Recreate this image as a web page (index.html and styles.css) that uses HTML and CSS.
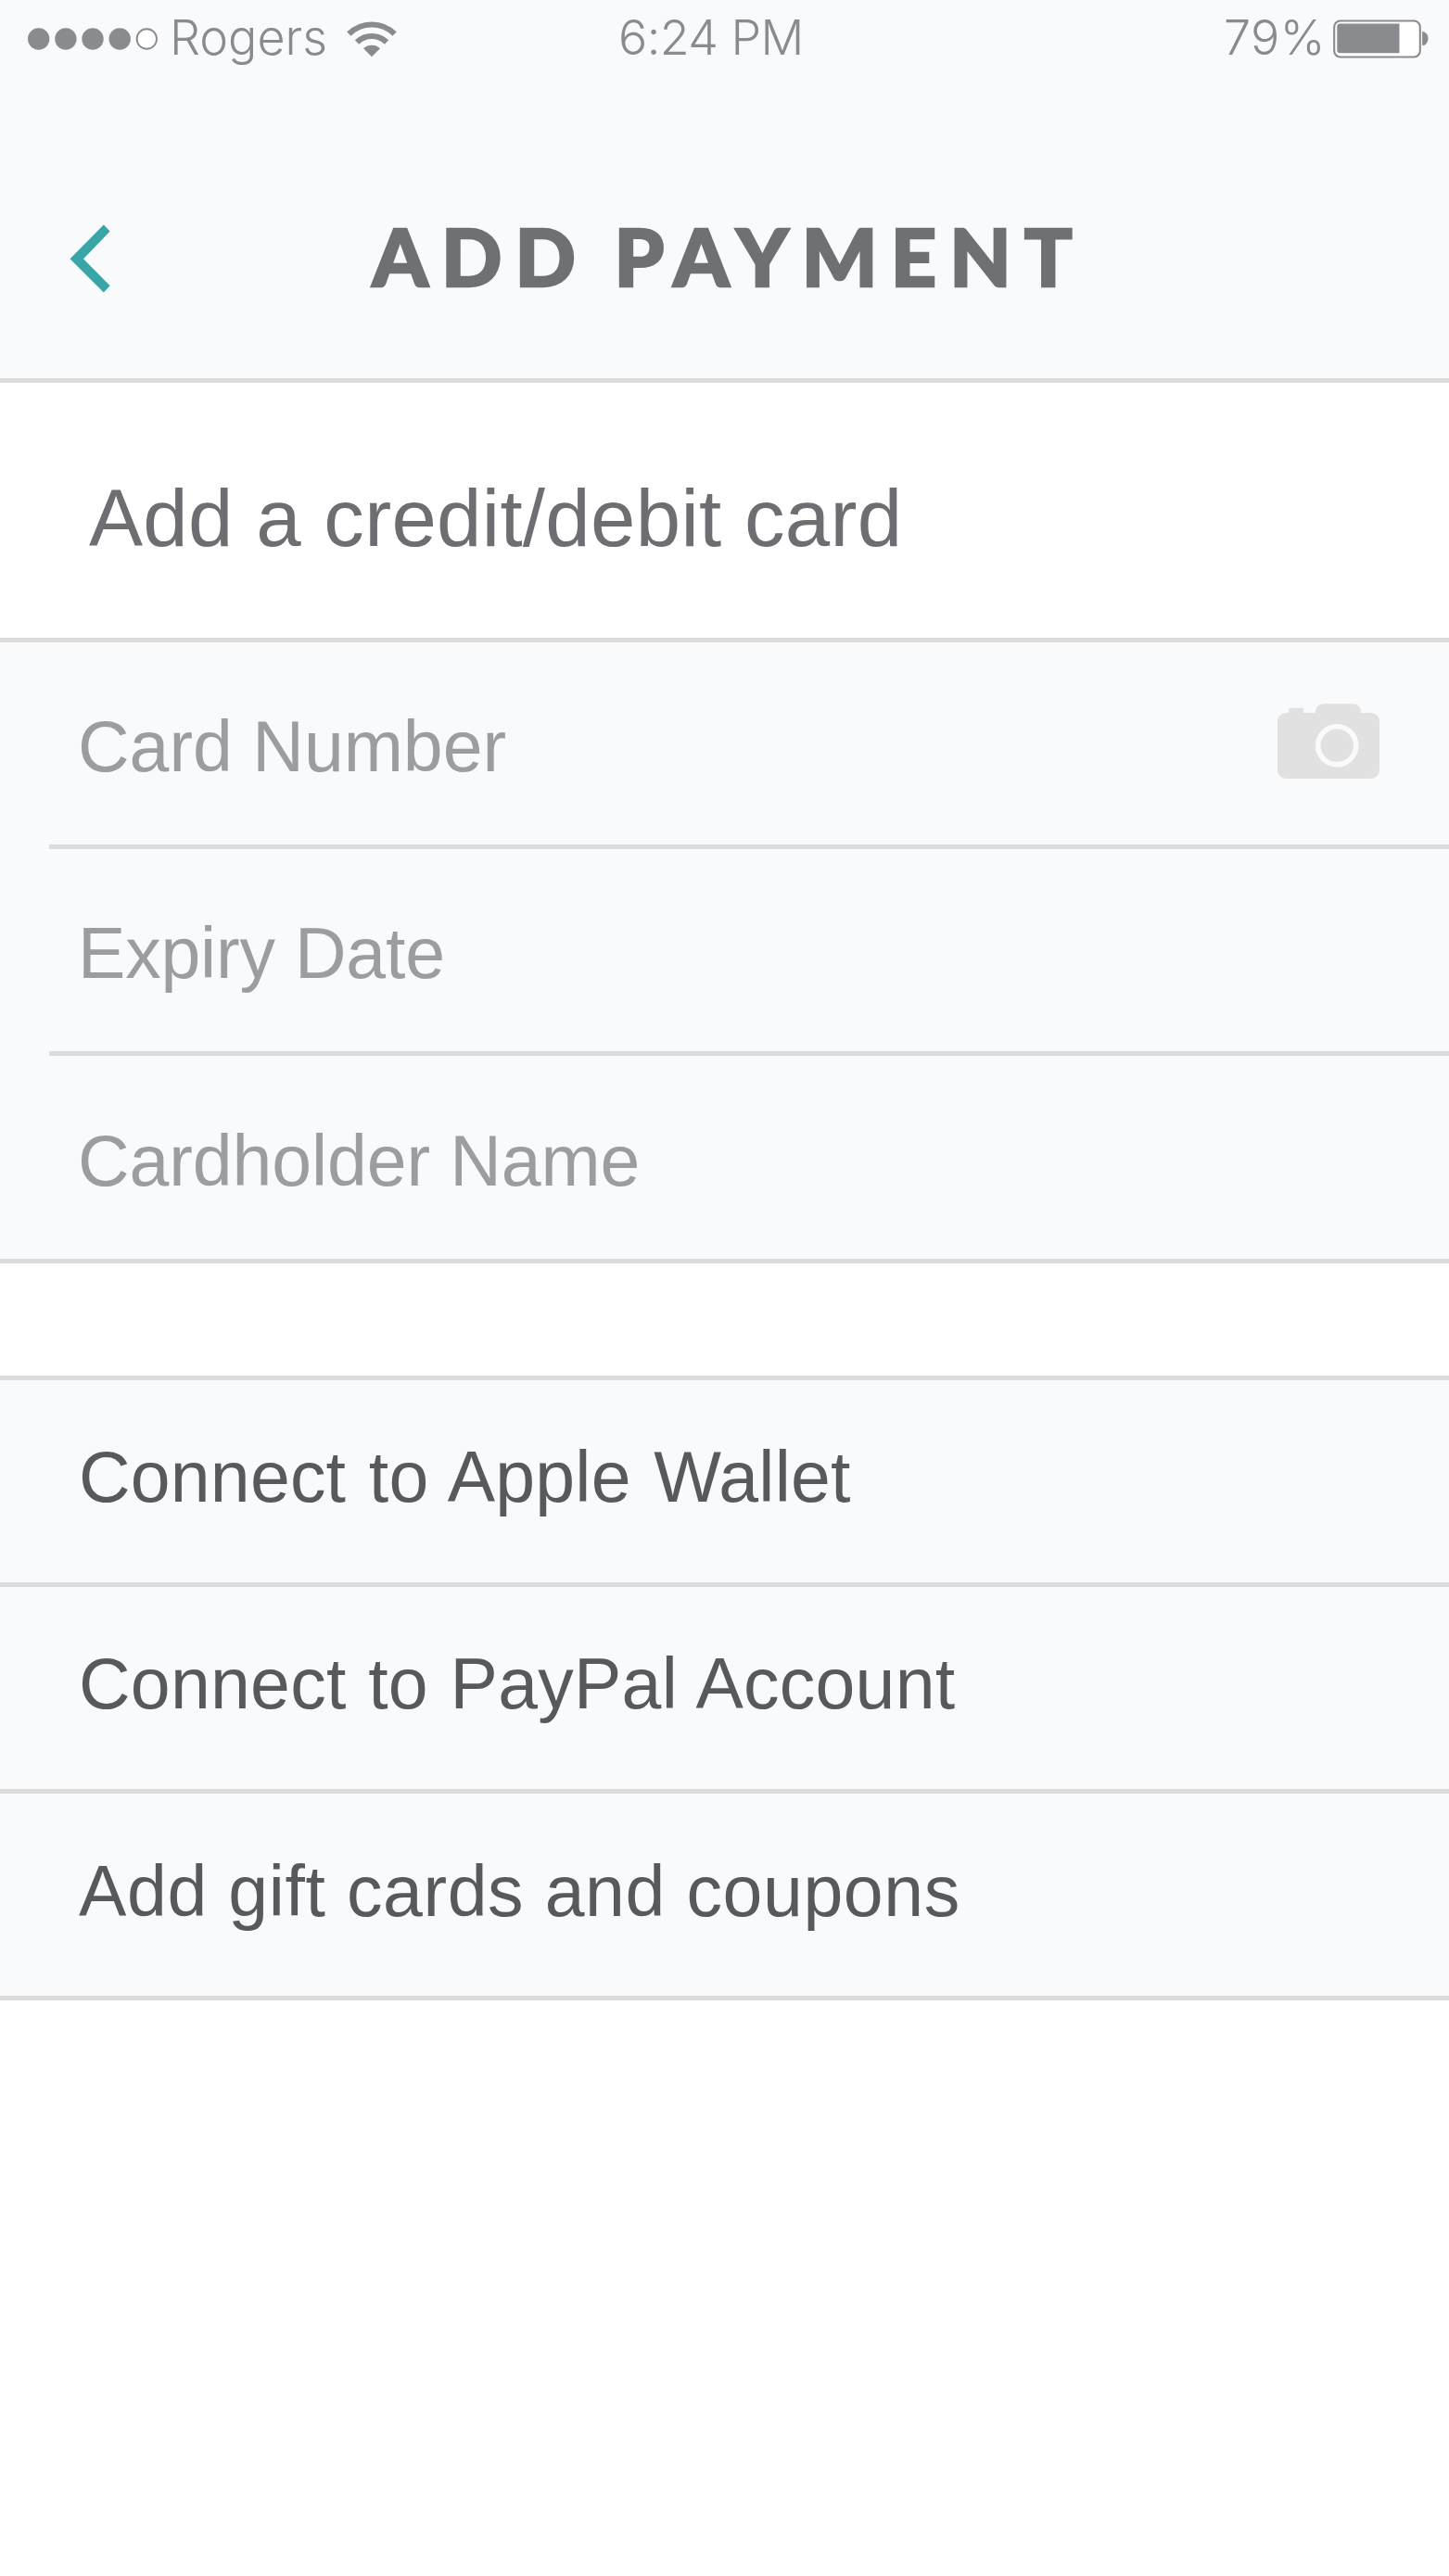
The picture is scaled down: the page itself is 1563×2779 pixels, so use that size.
FILE: index.html
```html
<!DOCTYPE html>
<html lang="en">
<head>
<meta charset="utf-8">
<title>Add Payment</title>
<link rel="stylesheet" href="styles.css">
</head>
<body>
<header class="header">
  <div class="status">
    <div class="status-left">
      <svg class="signal" width="142" height="26" viewBox="0 0 142 26">
        <g fill="#8a8b8e"><circle cx="12.7" cy="13" r="11.7"/><circle cx="41.9" cy="13" r="11.7"/><circle cx="71" cy="13" r="11.7"/><circle cx="100.2" cy="13" r="11.7"/></g>
        <circle cx="129.3" cy="13" r="10.7" fill="#fff" stroke="#8a8b8e" stroke-width="1.9"/>
      </svg>
      <span class="carrier">Rogers</span>
      <svg class="wifi" width="54" height="40" viewBox="0 0 54 40">
        <g fill="none" stroke="#8a8b8e" stroke-width="6.2">
          <path d="M2.4 14.6A35 35 0 0 1 51.6 14.6"/>
          <path d="M11 23.5A23 23 0 0 1 43 23.5"/>
        </g>
        <path d="M27 39.2L18 30.2A13.5 13.5 0 0 1 36 30.2Z" fill="#8a8b8e"/>
      </svg>
    </div>
    <span class="time">6:24 PM</span>
    <div class="status-right">
      <span class="percent">79%</span>
      <svg class="battery" width="104" height="42" viewBox="0 0 104 42">
        <rect x="1.2" y="1.5" width="92.6" height="39" rx="6.5" fill="#fff" stroke="#8a8b8e" stroke-width="2.1"/>
        <path d="M7.5 4.5H71.5V36.3H7.5Q4.3 36.3 4.3 33.1V7.7Q4.3 4.5 7.5 4.5Z" fill="#8a8b8e"/>
        <path d="M96.1 13.1A6.4 7.5 0 0 1 96.1 28.1Z" fill="#8a8b8e"/>
      </svg>
    </div>
  </div>
  <div class="nav">
    <a class="back" aria-label="Back"><svg width="44" height="74" viewBox="0 0 44 74"><path d="M36.8 .6L43.6 7.6L15 37.3L43.6 66.3L36.8 73.5L.5 37.3Z" fill="#38a6a6"/></svg></a>
    <h1 class="title">ADD PAYMENT</h1>
  </div>
</header>
<main>
  <h2 class="heading">Add a credit/debit card</h2>
  <section class="fields">
    <div class="field"><span>Card Number</span>
      <svg class="camera" width="110" height="82" viewBox="0 0 110 82">
        <path d="M9 10H12.3V4.7H28V10H41A9 9 0 0 1 50 .2H81A9 9 0 0 1 90 10H101A9 9 0 0 1 110 19V72A9 9 0 0 1 101 81H9A9 9 0 0 1 0 72V19A9 9 0 0 1 9 10Z" fill="#e1e1e1"/>
        <circle cx="64.2" cy="45.3" r="20.5" fill="none" stroke="#f9fafc" stroke-width="5.6"/>
      </svg>
    </div>
    <div class="field field-expiry"><span>Expiry Date</span></div>
    <div class="field field-name"><span>Cardholder Name</span></div>
  </section>
  <section class="links">
    <div class="link link-wallet">Connect to Apple Wallet</div>
    <div class="link">Connect to PayPal Account</div>
    <div class="link link-gift">Add gift cards and coupons</div>
  </section>
</main>
</body>
</html>
```
FILE: styles.css
```css
* { box-sizing: border-box; }

body {
  margin: 0;
  background: #fff;
  font-family: "Liberation Sans", Arial, sans-serif;
}

.header {
  height: 413px;
  background: #f9fafc;
  border-bottom: 5px solid #dcdcdc;
}

.status {
  display: grid;
  grid-template-columns: 667px 1fr 245px;
  height: 80px;
  line-height: 82px;
  font-family: Inter, "Liberation Sans", sans-serif;
  font-weight: 300;
  font-size: 52px;
  color: #8a8b8e;
  white-space: nowrap;
}

.status-left,
.status-right { display: flex; align-items: flex-start; }

.signal { margin: 29px 0 0 29px; }
.carrier { width: 191px; margin-left: 12px; }
.wifi { margin-top: 22px; }
.time { letter-spacing: -0.6px; }
.percent { width: 118px; margin-left: 2px; letter-spacing: 0.4px; }
.battery { margin-top: 21px; }

.nav {
  display: flex;
  align-items: flex-start;
}

.back { display: block; width: 44px; height: 74px; margin: 162px 0 0 75px; }
.back svg { display: block; }

.title {
  margin: 146px 0 0 282.5px;
  font: 900 86px/100px Lato, sans-serif;
  letter-spacing: 14.1px;
  word-spacing: -7px;
  color: #6f7072;
  -webkit-text-stroke: 2.4px #6f7072;
}

.heading {
  height: 280px;
  margin: 0;
  padding: 16px 0 0 96px;
  border-bottom: 5px solid #dcdcdc;
  font-weight: 400;
  font-size: 87px;
  line-height: 260px;
  letter-spacing: 0.3px;
  color: #6d6e71;
}

.fields {
  height: 670px;
  padding-left: 53px;
  background: #f9fafc;
  box-shadow: inset 0 -5px #dcdcdc;
}

.field {
  display: flex;
  justify-content: space-between;
  height: 223px;
  padding: 5px 75px 0 31px;
  border-bottom: 5px solid #dcdcdc;
  font-size: 77px;
  line-height: 214px;
  color: #9c9da0;
}

.field-expiry { letter-spacing: -0.2px; }
.field-name { height: 224px; padding-top: 6px; border-bottom: 0; letter-spacing: -0.1px; }
.camera { margin-top: 61px; }

.links {
  margin-top: 121px;
  border-top: 5px solid #dcdcdc;
}

.link {
  height: 223px;
  padding: 1px 0 10px 85px;
  background: #f9fafc;
  border-bottom: 5px solid #dcdcdc;
  font-size: 77px;
  line-height: 207px;
  letter-spacing: 0.25px;
  word-spacing: 2px;
  color: #58595b;
}

.link-wallet { letter-spacing: 0.2px; word-spacing: 3px; }
.link-gift { padding-top: 2px; letter-spacing: 0.6px; word-spacing: 0.5px; }
```
